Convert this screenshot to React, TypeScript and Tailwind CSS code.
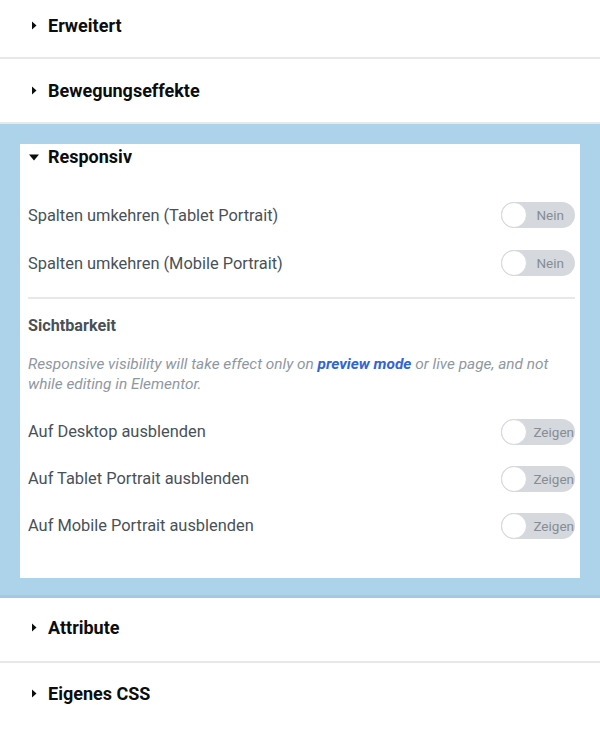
import React from "react";

function CaretRight() {
  return (
    <svg width="6" height="9" viewBox="0 0 6 9" className="shrink-0">
      <polygon points="1,0.5 5.5,4.5 1,8.5" fill="#0c0d0e" />
    </svg>
  );
}

function CaretDown() {
  return (
    <svg width="10" height="7" viewBox="0 0 10 7" className="shrink-0">
      <polygon points="0,0.5 10,0.5 5,6.5" fill="#0c0d0e" />
    </svg>
  );
}

function ClosedSection({
  title,
  first,
  last,
  lifted,
}: {
  title: string;
  first?: boolean;
  last?: boolean;
  lifted?: boolean;
}) {
  return (
    <div
      className={`flex items-center bg-white pl-[31px] ${
        last ? "" : "border-b-2 border-[#e6e8ea]"
      } ${first ? "h-[59px] pb-[6px]" : "h-[65px]"} ${lifted ? "pb-[4px]" : ""}`}
    >
      <CaretRight />
      <span className="ml-[11px] text-[18px] font-bold leading-5 text-[#0c0d0e]">
        {title}
      </span>
    </div>
  );
}

function Toggle({ label }: { label: string }) {
  return (
    <div className="relative h-[26px] w-[74px] shrink-0 rounded-full bg-[#d5d8dc]">
      <div className="absolute left-0 top-0 h-[26px] w-[26px] rounded-full border border-[#d5d8dc] bg-white" />
      <span
        className={`absolute top-0 text-[13.5px] leading-[26px] text-[#868d95] ${
          label === "Nein" ? "right-[11px]" : "right-[1px]"
        }`}
      >
        {label}
      </span>
    </div>
  );
}

function SwitchRow({ label, value }: { label: string; value: string }) {
  return (
    <div className="flex h-[47px] items-center justify-between">
      <span className="pt-[2px] text-[16.4px] text-[#495157]">{label}</span>
      <Toggle label={value} />
    </div>
  );
}

export default function App() {
  return (
    <div
      className="w-[600px] h-[750px] overflow-hidden bg-white"
      style={{ fontFamily: "Roboto, 'Liberation Sans', sans-serif" }}
    >
      <ClosedSection title="Erweitert" first />
      <ClosedSection title="Bewegungseffekte" />

      <div className="border-b-[3px] border-[#a3c8df] bg-[#acd3ea] px-5 pt-5 pb-[17px]">
        <div className="bg-white pb-[29px]">
          <div className="flex h-[26px] items-center pl-[9px]">
            <CaretDown />
            <span className="ml-[9px] text-[18px] font-bold leading-5 text-[#0c0d0e]">
              Responsiv
            </span>
          </div>

          <div className="pl-2 pr-[5px] pt-[21px]">
            <div className="flex h-[48px] items-center justify-between">
              <span className="pt-[2px] text-[16.4px] text-[#495157]">
                Spalten umkehren (Tablet Portrait)
              </span>
              <Toggle label="Nein" />
            </div>
            <div className="flex h-[48px] items-center justify-between">
              <span className="pt-[2px] text-[16.4px] text-[#495157]">
                Spalten umkehren (Mobile Portrait)
              </span>
              <Toggle label="Nein" />
            </div>

            <div className="mt-[10px] h-[2px] bg-[#e6e8ea]" />

            <div className="pt-[17px] text-[16.2px] font-bold leading-5 text-[#495157]">
              Sichtbarkeit
            </div>

            <p className="mt-[18px] text-[15.4px] italic leading-5 text-[#8f98a1]">
              Responsive visibility will take effect only on{" "}
              <a className="font-bold text-[#2f66d3]">preview mode</a> or live
              page, and not while editing in Elementor.
            </p>

            <div className="pt-[14px]">
              <SwitchRow label="Auf Desktop ausblenden" value="Zeigen" />
              <SwitchRow label="Auf Tablet Portrait ausblenden" value="Zeigen" />
              <SwitchRow label="Auf Mobile Portrait ausblenden" value="Zeigen" />
            </div>
          </div>
        </div>
      </div>

      <ClosedSection title="Attribute" lifted />
      <ClosedSection title="Eigenes CSS" last lifted />
    </div>
  );
}
